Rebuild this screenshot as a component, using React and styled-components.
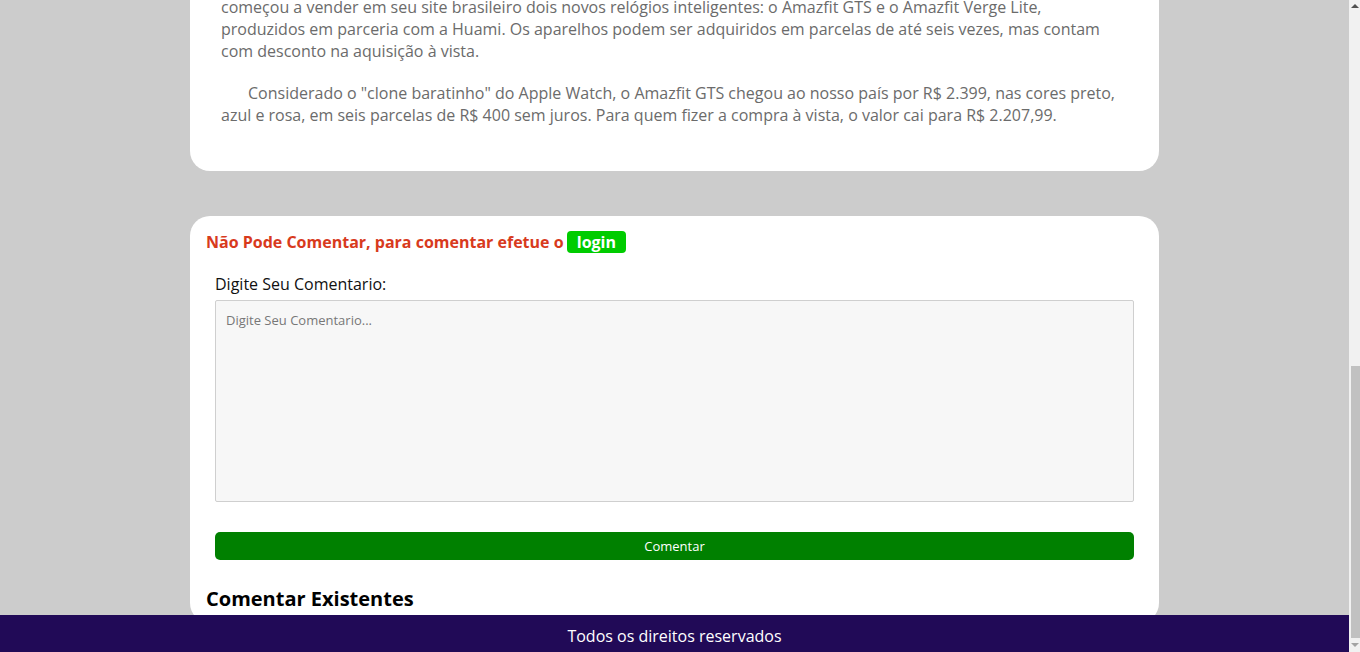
import React, { useLayoutEffect } from 'react';
import styled, { createGlobalStyle } from 'styled-components';

const GlobalStyle = createGlobalStyle`
	body {
		margin: 0;
		background-color: #cccccc;
		font-family: 'Open Sans', 'Liberation Sans', sans-serif;
	}
	* {
		box-sizing: border-box;
	}
`;

const Page = styled.div`
	padding: 0 11px 29px 0;
`;

const Header = styled.header`
	height: 60px;
	background-color: #210a57;
	color: #fff;
	display: flex;
	align-items: center;
	padding: 0 190px;
	font-size: 22px;
	font-weight: 700;
`;

const Card = styled.section`
	width: 969px;
	margin: 45px auto 0;
	background-color: #fff;
	border-radius: 20px;
	padding: ${(p) => p.$padding};
`;

const Title = styled.h1`
	margin: 0 0 20px;
	font-size: 30px;
	line-height: 40px;
	color: #222;
`;

const Cover = styled.div`
	height: 460px;
	border-radius: 10px;
	margin-bottom: 25px;
	background: linear-gradient(135deg, #3a3a3a, #8a8a8a);
`;

const Paragraph = styled.p`
	margin: 0 0 20px;
	font-size: 16px;
	line-height: 22px;
	color: #6b6b6b;
	text-indent: 27px;
`;

const Warning = styled.div`
	font-size: 16px;
	font-weight: 700;
	line-height: 22px;
	color: #d83a1d;
`;

const LoginBadge = styled.a`
	display: inline-block;
	margin-left: -1px;
	padding: 0 10px;
	border-radius: 4px;
	background-color: #00cc00;
	color: #fff;
	text-decoration: none;
`;

const Form = styled.form`
	display: flex;
	flex-direction: column;
	padding: 0 9px;
	margin-top: 20px;
`;

const Label = styled.label`
	font-size: 16px;
	line-height: 22px;
	color: #111;
	margin-bottom: 5px;
`;

const TextArea = styled.textarea`
	height: 202px;
	padding: 10px;
	resize: none;
	border: 1px solid #cfcfcf;
	border-radius: 2px;
	background-color: #f7f7f7;
	font-family: 'Open Sans', 'Liberation Sans', sans-serif;
	font-size: 13px;
	line-height: 18px;
	&::placeholder {
		color: #777;
	}
`;

const SubmitButton = styled.button`
	margin-top: 30px;
	height: 28px;
	border: none;
	border-radius: 5px;
	background-color: #008000;
	color: #fff;
	font-family: 'Open Sans', 'Liberation Sans', sans-serif;
	font-size: 13px;
`;

const SectionTitle = styled.h3`
	margin: 25px 0 0;
	font-size: 20px;
	line-height: 27px;
	color: #000;
`;

const Footer = styled.footer`
	position: fixed;
	left: 0;
	right: 11px;
	bottom: 0;
	height: 37px;
	display: flex;
	align-items: center;
	justify-content: center;
	padding-top: 4px;
	background-color: #210a57;
	color: #fff;
	font-size: 16px;
`;

/* stand-in for the window scrollbar seen in the screenshot */
const ScrollTrack = styled.div`
	position: fixed;
	top: 0;
	right: 0;
	bottom: 0;
	width: 11px;
	background-color: #f1f1f1;
`;

const ScrollThumb = styled.div`
	position: absolute;
	top: 366px;
	bottom: 14px;
	left: 2px;
	right: 0;
	background-color: #c1c1c1;
`;

const ScrollArrow = styled.div`
	position: absolute;
	left: 2px;
	width: 0;
	height: 0;
	border-left: 4px solid transparent;
	border-right: 4px solid transparent;
	${(p) =>
		p.$down
			? `bottom: 5px; border-top: 4px solid #a3a3a3;`
			: `top: 4px; border-bottom: 4px solid #505050;`}
`;

const App = () => {
	useLayoutEffect(() => {
		window.scrollTo(0, document.documentElement.scrollHeight);
	}, []);

	return (
		<>
			<GlobalStyle />
			<Page>
				<Header>Tech Notícias</Header>
				<Card $padding="25px 31px 25px">
					<Title>Amazfit GTS e Amazfit Verge Lite chegam oficialmente ao Brasil</Title>
					<Cover />
					<Paragraph>
						Depois de meses de espera pelos consumidores brasileiros, a fabricante chinesa Xiaomi finalmente, em
						novembro, começou a vender em seu site brasileiro dois novos relógios inteligentes: o Amazfit GTS e o
						Amazfit Verge Lite, produzidos em parceria com a Huami. Os aparelhos podem ser adquiridos em parcelas
						de até seis vezes, mas contam com desconto na aquisição à vista.
					</Paragraph>
					<Paragraph>
						Considerado o "clone baratinho" do Apple Watch, o Amazfit GTS chegou ao nosso país por R$ 2.399, nas
						cores preto, azul e rosa, em seis parcelas de R$ 400 sem juros. Para quem fizer a compra à vista, o
						valor cai para R$ 2.207,99.
					</Paragraph>
				</Card>
				<Card $padding="15px 16px 11px">
					<Warning>
						Não Pode Comentar, para comentar efetue o <LoginBadge href="#">login</LoginBadge>
					</Warning>
					<Form onSubmit={(e) => e.preventDefault()}>
						<Label htmlFor="comentario">Digite Seu Comentario:</Label>
						<TextArea id="comentario" placeholder="Digite Seu Comentario..." />
						<SubmitButton type="submit">Comentar</SubmitButton>
					</Form>
					<SectionTitle>Comentar Existentes</SectionTitle>
				</Card>
			</Page>
			<Footer>Todos os direitos reservados</Footer>
			<ScrollTrack>
				<ScrollArrow />
				<ScrollThumb />
				<ScrollArrow $down />
			</ScrollTrack>
		</>
	);
};

export default App;
